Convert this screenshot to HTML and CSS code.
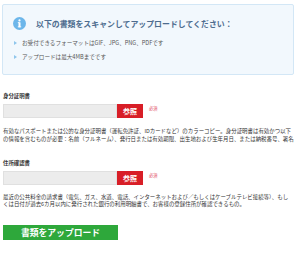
FILE: index.html
```html
<!DOCTYPE html>
<html lang="ja">
<head>
<meta charset="utf-8">
<title>書類アップロード</title>
<link rel="stylesheet" href="styles.css">
</head>
<body>
<div class="page">
  <div class="notice">
    <div class="notice-head">
      <svg class="info-icon" width="13" height="13" viewBox="0 0 13 13" aria-hidden="true">
        <circle cx="6.5" cy="6.5" r="6.5" fill="#6cb6ea"/>
        <circle cx="6.5" cy="3.4" r="1.1" fill="#fff"/>
        <rect x="5.5" y="5.2" width="2" height="5" rx="0.5" fill="#fff"/>
        <rect x="4.8" y="5.2" width="1.2" height="0.9" fill="#fff"/>
        <rect x="4.8" y="9.4" width="3.4" height="0.9" fill="#fff"/>
      </svg>
      <span class="notice-title">以下の書類をスキャンしてアップロードしてください：</span>
    </div>
    <ul class="notice-list">
      <li>お受付できるフォーマットはGIF、JPG、PNG、PDFです</li>
      <li>アップロードは最大4MBまでです</li>
    </ul>
  </div>

  <div class="field first">
    <div class="field-label">身分証明書</div>
    <div class="file-row">
      <div class="file-input"></div>
      <div class="file-btn">参照</div>
      <span class="required">必須</span>
    </div>
    <p class="field-desc">有効なパスポートまたは公的な身分証明書（運転免許証、IDカードなど）のカラーコピー。身分証明書は有効かつ以下<br>の情報を含むものが必要：名前（フルネーム）、発行日または有効期限、出生地および生年月日、または納税番号、署名</p>
  </div>

  <div class="field second">
    <div class="field-label">住所確認書</div>
    <div class="file-row">
      <div class="file-input"></div>
      <div class="file-btn">参照</div>
      <span class="required">必須</span>
    </div>
    <p class="field-desc">最近の公共料金の請求書（電気、ガス、水道、電話、インターネットおよび／もしくはケーブルテレビ接続等）、もし<br>くは日付が過去6カ月以内に発行された銀行の利用明細書で、お客様の登録住所が確認できるもの。</p>
  </div>

  <div class="submit-btn">書類をアップロード</div>
</div>
</body>
</html>
```

FILE: styles.css
```css
html, body {
  margin: 0;
  padding: 0;
  background: #fff;
}
body {
  font-family: "Noto Sans CJK JP", "Noto Sans", sans-serif;
  color: #333;
}
.page {
  padding: 4px 6px 0 2px;
}
.notice {
  background: #f2f8fd;
  border: 1px solid #d3e7f6;
  border-radius: 2px;
  padding: 12px 0 10px 0;
  box-sizing: border-box;
}
.notice-head {
  display: flex;
  align-items: center;
  gap: 10px;
  padding-left: 10px;
  height: 13px;
}
.info-icon {
  flex: none;
  display: block;
}
.notice-title {
  font-size: 7.9px;
  font-weight: bold;
  color: #4d6c8e;
  line-height: 13px;
  white-space: nowrap;
}
.notice-list {
  list-style: none;
  margin: 6px 0 0 0;
  padding: 0 0 0 19px;
}
.notice-list li {
  position: relative;
  font-size: 5.6px;
  line-height: 14px;
  color: #555;
  white-space: nowrap;
}
.notice-list li::before {
  content: "";
  position: absolute;
  left: -8px;
  top: 5px;
  border-left: 3px solid #8fc6ec;
  border-top: 2.2px solid transparent;
  border-bottom: 2.2px solid transparent;
}
.field {
  margin-left: 1px;
}
.field.first {
  margin-top: 17px;
}
.field.second {
  margin-top: 15px;
}
.field-label {
  font-size: 5.4px;
  line-height: 8px;
  color: #333;
  font-weight: bold;
}
.file-row {
  display: flex;
  align-items: flex-start;
  margin-top: 4px;
  height: 14px;
}
.file-input {
  width: 114px;
  height: 14px;
  box-sizing: border-box;
  background: #ececec;
  border: 1px solid #e0e0e0;
}
.file-btn {
  width: 26px;
  height: 14px;
  background: #d81e27;
  color: #fff;
  font-size: 7px;
  font-weight: bold;
  line-height: 14px;
  text-align: center;
}
.required {
  margin-left: 6px;
  font-size: 4.2px;
  line-height: 8px;
  color: #e14a5f;
}
.field-desc {
  margin: 10px 0 0 0;
  width: 296px;
  font-size: 5.45px;
  line-height: 7.8px;
  color: #333;
}
.second .field-desc {
  margin-top: 9px;
}
.submit-btn {
  margin: 16px 0 0 1px;
  width: 115px;
  height: 15px;
  background: #2ea83b;
  color: #fff;
  font-size: 8.8px;
  font-weight: bold;
  line-height: 15px;
  text-align: center;
}
```
